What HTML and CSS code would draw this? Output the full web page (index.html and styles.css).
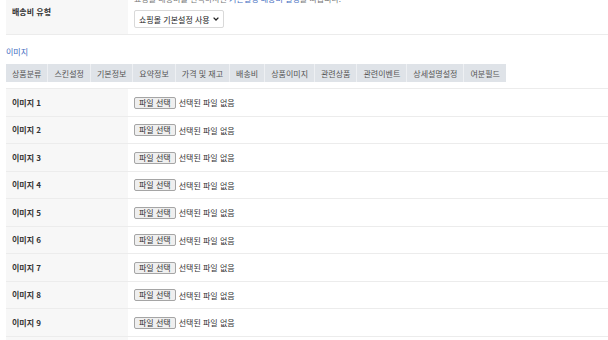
FILE: index.html
```html
<!DOCTYPE html>
<html lang="ko">
<head>
    <meta charset="UTF-8">
    <meta name="viewport" content="width=device-width, initial-scale=1.0">
    <title>상품 수정</title>
    <link rel="stylesheet" href="styles.css">
</head>
<body>
    <div class="wrap">
        <table class="frm frm-top">
            <tr>
                <th>배송비 유형</th>
                <td>
                    <p class="help">쇼핑몰 배송비를 선택하시면 <a href="#">기본설정 배송비 설정</a>을 따릅니다.</p>
                    <div class="select">
                        <span>쇼핑몰 기본설정 사용</span>
                        <svg width="6" height="4" viewBox="0 0 6 4"><path d="M0.6 0.6 L3 3 L5.4 0.6" fill="none" stroke="#222" stroke-width="1.3"/></svg>
                    </div>
                </td>
            </tr>
        </table>

        <h2 class="sec-title">이미지</h2>

        <ul class="tabs">
            <li>상품분류</li>
            <li>스킨설정</li>
            <li>기본정보</li>
            <li>요약정보</li>
            <li>가격 및 재고</li>
            <li>배송비</li>
            <li>상품이미지</li>
            <li>관련상품</li>
            <li>관련이벤트</li>
            <li>상세설명설정</li>
            <li>여분필드</li>
        </ul>

        <table class="frm frm-img">
            <tr><th>이미지 1</th><td><span class="file-btn">파일 선택</span><span class="file-name">선택된 파일 없음</span></td></tr>
            <tr><th>이미지 2</th><td><span class="file-btn">파일 선택</span><span class="file-name">선택된 파일 없음</span></td></tr>
            <tr><th>이미지 3</th><td><span class="file-btn">파일 선택</span><span class="file-name">선택된 파일 없음</span></td></tr>
            <tr><th>이미지 4</th><td><span class="file-btn">파일 선택</span><span class="file-name">선택된 파일 없음</span></td></tr>
            <tr><th>이미지 5</th><td><span class="file-btn">파일 선택</span><span class="file-name">선택된 파일 없음</span></td></tr>
            <tr><th>이미지 6</th><td><span class="file-btn">파일 선택</span><span class="file-name">선택된 파일 없음</span></td></tr>
            <tr><th>이미지 7</th><td><span class="file-btn">파일 선택</span><span class="file-name">선택된 파일 없음</span></td></tr>
            <tr><th>이미지 8</th><td><span class="file-btn">파일 선택</span><span class="file-name">선택된 파일 없음</span></td></tr>
            <tr><th>이미지 9</th><td><span class="file-btn">파일 선택</span><span class="file-name">선택된 파일 없음</span></td></tr>
            <tr><th>이미지 10</th><td><span class="file-btn">파일 선택</span><span class="file-name">선택된 파일 없음</span></td></tr>
        </table>
    </div>
</body>
</html>
```

FILE: styles.css
```css
* {
    margin: 0;
    padding: 0;
    box-sizing: border-box;
}

body {
    background: #fff;
    color: #333;
    font-family: 'Malgun Gothic', 'Noto Sans CJK KR', 'Noto Sans', sans-serif;
    font-size: 8px;
    overflow: hidden;
}

.wrap {
    padding-left: 6px;
    margin-top: -11px;
}

.frm {
    width: 100%;
    border-collapse: collapse;
}

.frm th {
    width: 122px;
    background: #f7f7f7;
    text-align: left;
    font-weight: bold;
    padding: 0 6px;
    vertical-align: middle;
    color: #333;
}

.frm td {
    padding: 0 6px;
    vertical-align: middle;
}

.frm-top tr {
    border-bottom: 1px solid #ececec;
}

.frm-top td {
    padding: 5px 6px 6px;
}

.help {
    color: #777;
    line-height: 10px;
    height: 10px;
    margin-bottom: 6px;
    white-space: nowrap;
}

.help a {
    color: #3f6cc0;
    text-decoration: none;
}

.select {
    display: inline-flex;
    align-items: center;
    gap: 3px;
    height: 18px;
    padding: 0 4px;
    border: 1px solid #d9d9d9;
    border-radius: 2px;
    background: #fff;
    color: #222;
    white-space: nowrap;
}

.select svg {
    flex-shrink: 0;
}

.sec-title {
    font-size: 8px;
    font-weight: normal;
    color: #3f6cc0;
    line-height: 10px;
    margin: 12px 0 7px;
}

.tabs {
    list-style: none;
    display: flex;
    width: max-content;
    background: #dfe3e8;
    height: 18px;
    margin-bottom: 6px;
}

.tabs li {
    display: flex;
    align-items: center;
    padding: 0 6px;
    color: #555;
    border-right: 1px solid #eef0f3;
    white-space: nowrap;
}

.tabs li:last-child {
    border-right: none;
}

.frm-img {
    border-top: 1px solid #ececec;
}

.frm-img tr {
    height: 27.5px;
    border-bottom: 1px solid #ececec;
}

.file-btn {
    display: inline-block;
    height: 12px;
    line-height: 10px;
    padding: 0 4px;
    border: 1px solid #a5a5a5;
    border-radius: 2px;
    background: #efefef;
    color: #333;
    vertical-align: middle;
}

.file-name {
    margin-left: 3px;
    font-size: 8px;
    color: #333;
    vertical-align: middle;
}
```
